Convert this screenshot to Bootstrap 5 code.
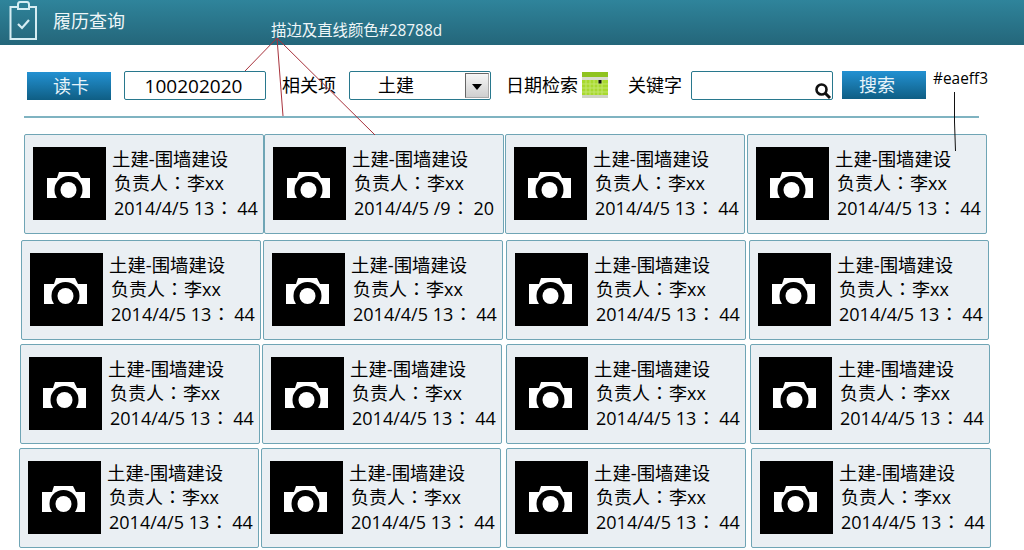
<!DOCTYPE html>
<html lang="zh-CN">
<head>
  <meta charset="UTF-8">
  <title>履历查询</title>
  <link href="https://cdn.jsdelivr.net/npm/bootstrap@5.3.3/dist/css/bootstrap.min.css" rel="stylesheet">
  <style>
    body { width: 1024px; height: 550px; overflow: hidden; background: #fff; color: #000; font-family: "Open Sans", "Noto Sans CJK SC", sans-serif; font-size: 18px; position: relative; }
    .top-bar { height: 45px; background: linear-gradient(#2f849b, #24667a); color: #eef6f8; }
    .top-bar svg { margin-left: 9px; }
    .top-title { margin-left: 15px; margin-top: -3px; line-height: 26px; }
    .top-note { font-size: 15.4px; margin-left: 146px; margin-top: 20px; line-height: 22px; }
    .tool-row { height: 29px; margin: 26px 0 0 27px; }
    .blue-btn { width: 84px; height: 28px; padding: 0; border: 0; border-radius: 0; background: linear-gradient(#2391d2, #0f5e84); color: #e8f4fa; font-size: 18px; line-height: 28px; }
    .blue-btn:hover { background: linear-gradient(#2391d2, #0f5e84); color: #e8f4fa; }
    .read-btn { padding-left: 4px; margin-top: 1px; }
    .boxed { height: 29px; border: 1px solid #28788d; border-radius: 2px; background: #fff; color: #000; font-size: 18px; padding: 0; box-shadow: none; }
    .card-no { width: 142px; margin-left: 13px; padding-right: 3px; text-align: center; font-size: 19px; }
    .lbl { white-space: nowrap; line-height: 29px; }
    .lbl-rel { margin-left: 16px; width: 56px; }
    .type-box { width: 142px; margin-left: 11px; padding-left: 28px; line-height: 26px; }
    .drop-arrow { position: absolute; top: 1px; right: 1px; width: 24px; height: 25px; background: linear-gradient(#f6f6f6, #cfcfcf); border: 1px solid #aaa; border-top-color: #666; border-left-color: #666; }
    .drop-arrow::after { content: ""; position: absolute; left: 6px; top: 10px; border: 5px solid transparent; border-top: 6px solid #000; border-bottom: 0; }
    .lbl-date { margin-left: 15px; width: 76px; }
    .cal-ico { margin-top: 1px; }
    .lbl-key { margin-left: 20px; width: 63px; }
    .key-box { width: 142px; }
    .search-ico { position: absolute; right: 0; top: 10px; }
    .find-btn { margin-left: 9px; padding-right: 14px; }
    .hex-note { font-size: 15.4px; margin: -2px 0 0 7px; line-height: 20px; }
    .rule { height: 2px; width: 955px; margin: 16px 0 16px 24px; background: #7fb3c1; }
    .tile-row { margin-bottom: 4px; }
    .tile-row:first-of-type { margin-bottom: 6px; }
    .tile { width: 240px; height: 100px; flex: none; border: 1px solid #6fa5b5; border-radius: 2px; background: #eaeff3; padding: 12px 0 0 8px; color: #000; }
    .shot { width: 73px; height: 73px; flex: none; background: #000; }
    .tile-text { margin-left: 6px; line-height: 24.5px; white-space: nowrap; }
    .tile-name { font-size: 18.4px; margin-bottom: -2px; }
    .tile-line { padding-left: 2px; }
    .mid-colon { display: inline-block; text-align: center; font-family: "Noto Sans CJK TC", sans-serif; width: 19px; }
    .wide-colon { width: 20px; margin-right: 3px; }
    .notes-layer { position: absolute; left: 0; top: 0; pointer-events: none; }
  </style>
</head>
<body>

  <svg width="0" height="0" class="d-block">
    <symbol id="cam" viewBox="0 0 73 73">
      <path fill="#fff" d="M14 31H24L26 25H45L48 31H57V51H14Z"/>
      <circle cx="35.500" cy="43" r="14" fill="#000"/>
      <rect x="14" y="51" width="43" height="8" fill="#000"/>
      <circle cx="35.500" cy="43" r="8" fill="#fff"/>
    </symbol>
  </svg>

  <div class="top-bar d-flex">
    <svg width="29" height="41" viewBox="0 0 29 41" fill="none" stroke="#d6edf3" stroke-width="2">
      <path d="M9 7H1.500V39H27V7H20"/>
      <path d="M9 9V4.500Q9 2 11 2H18Q20 2 20 4.500V9Z"/>
      <path d="M9 24L13 28L20 20" stroke-width="2.200"/>
    </svg>
    <div class="top-title align-self-center">履历查询</div>
    <div class="top-note">描边及直线颜色#28788d</div>
  </div>

  <div class="tool-row d-flex">
    <button class="btn blue-btn read-btn">读卡</button>
    <input class="form-control boxed card-no" value="100202020">
    <div class="lbl lbl-rel">相关项</div>
    <div class="boxed type-box position-relative">土建<span class="drop-arrow"></span></div>
    <div class="lbl lbl-date">日期检索</div>
    <svg width="26" height="26" viewBox="0 0 26 26" class="cal-ico">
      <rect width="26" height="26" fill="#a8d92e"/>
      <rect width="26" height="5" fill="#8fc31f"/>
      <rect y="5" width="26" height="3" fill="#d9dcd0"/>
      <rect y="23" width="26" height="3" fill="#cfd3c4"/>
      <rect x="16" y="8" width="4" height="4" fill="#111"/>
      <path d="M0 12H26M0 16H26M0 20H26M4 8V23M8 8V23M12 8V23M16 8V23M20 8V23" stroke="#c3e66f" stroke-width="1"/>
    </svg>
    <div class="lbl lbl-key">关键字</div>
    <div class="boxed key-box position-relative">
      <svg class="search-ico" width="18" height="18" viewBox="0 0 18 18" fill="none" stroke="#111">
        <circle cx="7.500" cy="7.500" r="5" stroke-width="2.600"/>
        <path d="M11 11L16 16" stroke-width="3"/>
      </svg>
    </div>
    <button class="btn blue-btn find-btn">搜索</button>
    <div class="hex-note">#eaeff3</div>
  </div>

  <div class="rule"></div>

  <div id="tiles"></div>

  <svg class="notes-layer" width="1024" height="550" fill="none">
    <path d="M277 38L245 71M277 38L283 116M277 38L375 135" stroke="#a8323c"/>
    <path d="M954.500 92V122L955.500 151" stroke="#111"/>
  </svg>

  <script>
    // left offset then the gap before each tile, the tiles in the shot don't line up exactly
    const rows = [[24, 0, 1, 2], [21, 2, 3, 3], [20, 2, 4, 4], [19, 2, 5, 5]];
    let html = '';
    rows.forEach((r, i) => {
      html += '<div class="tile-row d-flex">';
      r.forEach((gap, c) => {
        const when = (i === 0 && c === 1) ? '2014/4/5 /9' : '2014/4/5 13';
        const end = (i === 0 && c === 1) ? '20' : '44';
        html += `<div class="tile d-flex" style="margin-left:${gap}px">
          <svg class="shot"><use href="#cam"/></svg>
          <div class="tile-text">
            <div class="tile-name">土建-围墙建设</div>
            <div class="tile-line">负责人<span class="mid-colon">：</span>李xx</div>
            <div class="tile-line">${when}<span class="mid-colon wide-colon">：</span>${end}</div>
          </div>
        </div>`;
      });
      html += '</div>';
    });
    document.getElementById('tiles').innerHTML = html;
  </script>
  <script src="https://cdn.jsdelivr.net/npm/bootstrap@5.3.3/dist/js/bootstrap.bundle.min.js"></script>
</body>
</html>
